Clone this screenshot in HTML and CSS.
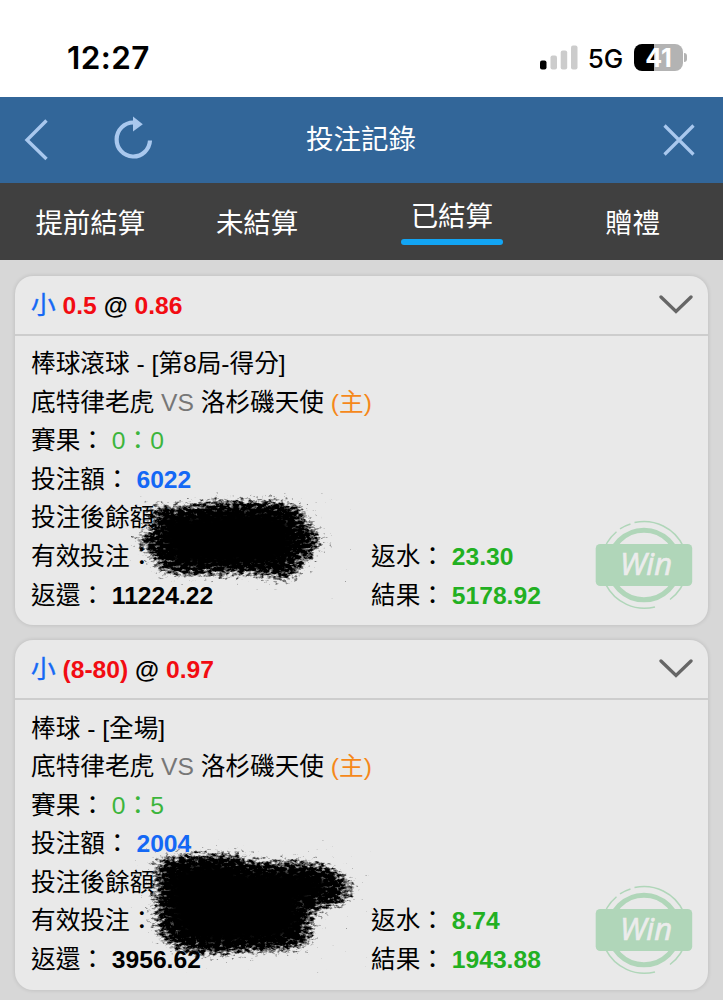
FILE: index.html
```html
<!DOCTYPE html>
<html lang="zh-Hant">
<head>
    <meta charset="UTF-8">
    <meta name="viewport" content="width=device-width, initial-scale=1.0">
    <title>投注記錄</title>
    <link rel="stylesheet" href="styles.css">
</head>
<body>

    <div class="status-bar">
        <span class="time">12:27</span>
        <div class="status-icons">
            <svg class="signal" width="38" height="25" viewBox="0 0 38 25">
                <rect x="0" y="15.5" width="6.5" height="9" rx="2" fill="#000"/>
                <rect x="10.5" y="10.5" width="6.5" height="14" rx="2" fill="#ccc"/>
                <rect x="20.7" y="5.5" width="6.5" height="19" rx="2" fill="#ccc"/>
                <rect x="31" y="0.5" width="6.5" height="24" rx="2" fill="#ccc"/>
            </svg>
            <span class="network">5G</span>
            <div class="battery"><span>41</span></div>
            <span class="battery-cap"></span>
        </div>
    </div>

    <header class="header">
        <svg class="icon-back" width="26" height="42" viewBox="0 0 26 42">
            <path d="M23.5 1.5 L4 21 L23.5 40" fill="none" stroke="#a9c8ee" stroke-width="3.4"/>
        </svg>
        <svg class="icon-refresh" width="40" height="44" viewBox="0 0 40 44">
            <path d="M19.3 6.5 A16.7 17 0 1 0 36 24.5" fill="none" stroke="#a9c8ee" stroke-width="4.2"/>
            <path d="M19 0.5 L28.8 8.3 L19 15.5 Z" fill="#a9c8ee"/>
        </svg>
        <h1>投注記錄</h1>
        <svg class="icon-close" width="32" height="32" viewBox="0 0 32 32">
            <path d="M1.5 1.5 L30.5 30.5 M30.5 1.5 L1.5 30.5" fill="none" stroke="#a9c8ee" stroke-width="3.2"/>
        </svg>
    </header>

    <nav class="tabs">
        <a class="tab">提前結算</a>
        <a class="tab tab-pending">未結算</a>
        <a class="tab active"><span>已結算</span></a>
        <a class="tab">贈禮</a>
    </nav>

    <!-- shared shapes -->
    <svg class="defs" width="0" height="0">
        <defs>
            <filter id="brush" x="-15%" y="-25%" width="130%" height="150%" color-interpolation-filters="sRGB">
                <feGaussianBlur in="SourceAlpha" stdDeviation="9 6" result="soft"/>
                <feTurbulence type="fractalNoise" baseFrequency="0.2 0.34" numOctaves="3" seed="4"/>
                <feColorMatrix values="0 0 0 0 0  0 0 0 0 0  0 0 0 0 0  1 0 0 0 0" result="grain"/>
                <feComposite in="soft" in2="grain" operator="arithmetic" k1="0" k2="2.1" k3="2.6" k4="-2.1" result="ink"/>
                <feGaussianBlur in="ink" stdDeviation="0.5" result="edge"/>
                <!-- solid middle, only the rim stays grainy -->
                <feMorphology in="SourceAlpha" operator="erode" radius="17 14"/>
                <feGaussianBlur stdDeviation="6 4" result="core"/>
                <feMerge>
                    <feMergeNode in="edge"/>
                    <feMergeNode in="core"/>
                    <feMergeNode in="core"/>
                </feMerge>
            </filter>
            <symbol id="win" viewBox="0 0 98 90">
                <circle cx="49" cy="45" r="34.8" fill="none" stroke="#b0d6b9" stroke-width="5"/>
                <path d="M39.5 2.6 A43.3 43.3 0 0 1 75 79.5 M60 86.9 A43.3 43.3 0 0 1 21.5 11.8 M25 8.8 A43.3 43.3 0 0 1 35.5 4" fill="none" stroke="#b0d6b9" stroke-width="1.5"/>
                <rect x="0.7" y="24" width="96.5" height="42" rx="4.5" fill="#b0d6b9"/>
                <text class="win-text" x="51" y="55.3" text-anchor="middle">Win</text>
            </symbol>
        </defs>
    </svg>

    <main class="list">
        <section class="card">
            <div class="card-head">
                <div class="pick"><span class="side">小</span> <b class="red">0.5</b> <b>@</b> <b class="red">0.86</b></div>
                <svg class="chevron" width="34" height="20" viewBox="0 0 34 20">
                    <path d="M2 2 L17 16.5 L32 2" fill="none" stroke="#666" stroke-width="3.3" stroke-linecap="round"/>
                </svg>
            </div>
            <div class="card-body">
                <div class="row">棒球滾球 - [第8局-得分]</div>
                <div class="row">底特律老虎 <span class="vs">VS</span> 洛杉磯天使 <span class="home">(主)</span></div>
                <div class="row">賽果： <span class="score">0：0</span></div>
                <div class="row">投注額： <b class="blue">6022</b></div>
                <div class="row">投注後餘額：</div>
                <div class="row cols"><div>有效投注：</div><div>返水： <b class="green">23.30</b></div></div>
                <div class="row cols"><div>返還： <b>11224.22</b></div><div>結果： <b class="green">5178.92</b></div></div>
            </div>
            <svg class="scribble" width="230" height="110" viewBox="0 0 230 110">
                <path filter="url(#brush)" d="M24 13 L60 13 L85 8 L160 8 L180 16 L184 31 L196 42 L198 53 L186 66 L175 78 L170 89 L150 88 L134 83 L40 84 L30 70 L22 60 L10 47 L26 38 Z"/>
            </svg>
            <svg class="stamp" width="98" height="90"><use href="#win"/></svg>
        </section>

        <section class="card">
            <div class="card-head">
                <div class="pick"><span class="side">小</span> <b class="red">(8-80)</b> <b>@</b> <b class="red">0.97</b></div>
                <svg class="chevron" width="34" height="20" viewBox="0 0 34 20">
                    <path d="M2 2 L17 16.5 L32 2" fill="none" stroke="#666" stroke-width="3.3" stroke-linecap="round"/>
                </svg>
            </div>
            <div class="card-body">
                <div class="row">棒球 - [全場]</div>
                <div class="row">底特律老虎 <span class="vs">VS</span> 洛杉磯天使 <span class="home">(主)</span></div>
                <div class="row">賽果： <span class="score">0：5</span></div>
                <div class="row">投注額： <b class="blue">2004</b></div>
                <div class="row">投注後餘額：</div>
                <div class="row cols"><div>有效投注：</div><div>返水： <b class="green">8.74</b></div></div>
                <div class="row cols"><div>返還： <b>3956.62</b></div><div>結果： <b class="green">1943.88</b></div></div>
            </div>
            <svg class="scribble scribble-tall" width="250" height="135" viewBox="0 0 250 135">
                <path filter="url(#brush)" d="M30 20 L60 14 L116 14 L122 21 L190 22 L216 32 L228 46 L224 63 L206 69 L188 73 L188 102 L170 112 L120 114 L84 117 L56 113 L36 102 L30 84 L28 44 Z"/>
            </svg>
            <svg class="stamp" width="98" height="90"><use href="#win"/></svg>
        </section>
    </main>

</body>
</html>
```
FILE: styles.css
```css
* {
    box-sizing: border-box;
}
body {
    margin: 0;
    height: 1000px;
    overflow: hidden;
    background: #d7d7d7;
    color: #000;
    font-family: "Liberation Sans", "Noto Sans CJK TC", sans-serif;
    font-size: 24.65px;
}

/* status bar */
.status-bar {
    height: 97px;
    padding: 18px 36px 0 67px;
    background: #fff;
    display: flex;
    align-items: center;
    justify-content: space-between;
    font-family: Inter, sans-serif;
}
.time {
    font-size: 31.5px;
    font-weight: 600;
    letter-spacing: 0.4px;
}
.status-icons {
    display: flex;
    align-items: center;
}
.network {
    margin: 1px 11px 0 10px;
    font-size: 26px;
    font-weight: 500;
    letter-spacing: -0.1px;
}
.battery {
    width: 49px;
    height: 27px;
    border-radius: 8px;
    background: linear-gradient(to right, #000 41%, #b3b3b3 41%);
    color: #fff;
    font-size: 25px;
    font-weight: 700;
    line-height: 28px;
    text-align: center;
}
.battery-cap {
    width: 3px;
    height: 9px;
    margin-left: 1px;
    border-radius: 0 4px 4px 0;
    background: #b3b3b3;
}

/* title bar */
.header {
    height: 86px;
    padding: 0 28px 0 23px;
    background: #326699;
    display: grid;
    grid-template-columns: 91px 192px 1fr 279px;
    align-items: center;
}
.header h1 {
    margin: 0;
    color: #fff;
    font-size: 27.5px;
    font-weight: normal;
    line-height: 40px;
    white-space: nowrap;
}
.icon-refresh {
    margin-top: -4px;
}
.icon-close {
    justify-self: end;
}

/* tabs */
.tabs {
    height: 77px;
    background: #404040;
    display: grid;
    grid-template-columns: repeat(4, 1fr);
}
.tab {
    padding-top: 21px;
    color: #fff;
    font-size: 27.5px;
    line-height: 40px;
    text-align: center;
}
.tab-pending {
    padding-right: 28px;
}
.tab.active {
    padding-top: 14px;
}
.tab.active span {
    display: inline-block;
    padding: 0 10px;
}
.tab.active span::after {
    content: "";
    display: block;
    height: 6px;
    margin: 2px -10px 0;
    border-radius: 3px;
    background: #12a5f4;
}
.defs {
    position: absolute;
}

/* bet cards */
.list {
    padding: 15.5px 15.5px 0 15px;
    display: flex;
    flex-direction: column;
    gap: 15px;
}
.card {
    position: relative;
    height: 349.5px;
    border-radius: 18px;
    background: #e9e9e9;
    box-shadow: 0 0 4px rgba(0, 0, 0, 0.14);
}
.card-head {
    height: 60px;
    padding: 0 15px 0 16px;
    border-bottom: 2px solid #cdcdcd;
    display: flex;
    align-items: center;
    justify-content: space-between;
}
.pick {
    margin-top: -4px;
}
.card-body {
    padding: 9.5px 16px;
}
.row {
    height: 38.6px;
    line-height: 38.6px;
    white-space: nowrap;
}
.cols {
    display: grid;
    grid-template-columns: 340px 1fr;
}
.side {
    color: #1468f5;
    -webkit-text-stroke: 0.4px #1468f5;
}
.blue {
    color: #1468f5;
}
.red {
    color: #f20c12;
}
.green {
    color: #22b022;
}
.score {
    color: #3cb53c;
}
.vs {
    color: #777;
}
.home {
    color: #f5881a;
}
.scribble {
    position: absolute;
    left: 109px;
    top: 216px;
}
.scribble-tall {
    left: 110px;
    top: 199px;
}
.stamp {
    position: absolute;
    right: 15px;
    bottom: 15px;
}
.win-text {
    fill: #ececec;
    stroke: #ececec;
    stroke-width: 0.7px;
    font-family: "Open Sans", sans-serif;
    font-size: 31px;
    font-style: italic;
    font-weight: 500;
}
```
